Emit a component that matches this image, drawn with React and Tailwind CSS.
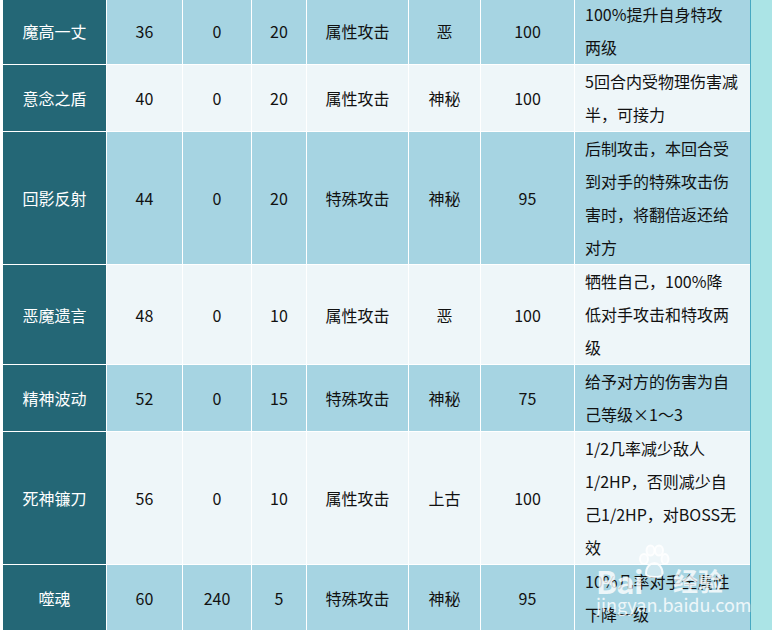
const rows = [
  { name: "魔高一丈", lv: "36", pp: "0", cnt: "20", kind: "属性攻击", attr: "恶", hit: "100", desc: ["100%提升自身特攻", "两级"] },
  { name: "意念之盾", lv: "40", pp: "0", cnt: "20", kind: "属性攻击", attr: "神秘", hit: "100", desc: ["5回合内受物理伤害减", "半，可接力"] },
  { name: "回影反射", lv: "44", pp: "0", cnt: "20", kind: "特殊攻击", attr: "神秘", hit: "95", desc: ["后制攻击，本回合受", "到对手的特殊攻击伤", "害时，将翻倍返还给", "对方"] },
  { name: "恶魔遗言", lv: "48", pp: "0", cnt: "10", kind: "属性攻击", attr: "恶", hit: "100", desc: ["牺牲自己，100%降", "低对手攻击和特攻两", "级"] },
  { name: "精神波动", lv: "52", pp: "0", cnt: "15", kind: "特殊攻击", attr: "神秘", hit: "75", desc: ["给予对方的伤害为自", "己等级×1～3"] },
  { name: "死神镰刀", lv: "56", pp: "0", cnt: "10", kind: "属性攻击", attr: "上古", hit: "100", desc: ["1/2几率减少敌人", "1/2HP，否则减少自", "己1/2HP，对BOSS无", "效"] },
  { name: "噬魂", lv: "60", pp: "240", cnt: "5", kind: "特殊攻击", attr: "神秘", hit: "95", desc: ["10%几率对手全属性", "下降一级"] },
];

function Cell({ bg, children }) {
  return <div className={`${bg} flex items-center justify-center text-[#111]`}>{children}</div>;
}

// baidu jingyan watermark sitting over the last rows
function Watermark() {
  return (
    <div className="absolute left-[594px] top-[540px] w-[150px] h-[80px] pointer-events-none text-white/80">
      <svg className="absolute left-[44px] top-[4px]" width="32" height="36" viewBox="0 0 32 36">
        <g fill="rgba(255,255,255,0.45)" stroke="rgba(255,255,255,0.85)" strokeWidth="2">
          <ellipse cx="6" cy="15" rx="4" ry="5" />
          <ellipse cx="12.5" cy="6.5" rx="4" ry="5" />
          <ellipse cx="21" cy="6.5" rx="4" ry="5" />
          <ellipse cx="27" cy="15" rx="3.5" ry="5" />
          <path d="M8 30 C 8 22, 13 19, 16.5 19 C 20 19, 25 23, 24.5 30 C 24 34, 9 34, 8 30 Z" />
        </g>
      </svg>
      <div className="absolute left-[2px] top-[25px] text-[31px] leading-none font-bold tracking-tight">Bai</div>
      <div className="absolute left-[79px] top-[28px] text-[25px] leading-none font-bold">经验</div>
      <div className="absolute left-[2px] top-[55px] text-[18px] leading-none">jingyan.baidu.com</div>
    </div>
  );
}

export default function App() {
  return (
    <div className="relative w-[772px] h-[630px] overflow-hidden flex bg-white font-['Noto_Sans_CJK_SC',sans-serif] text-[16px]">
      <div className="w-[750px] shrink-0 bg-white pl-[3px] -mt-[2px]">
        <div className="grid grid-cols-[103px_75px_68px_54px_101px_71px_93px_175px] gap-px bg-white">
          {rows.map((r, i) => {
            const bg = i % 2 === 0 ? "bg-[#a6d4e2]" : "bg-[#eef6f9]";
            return [
              <div key={`n${i}`} className="bg-[#246776] text-white flex items-center justify-center">{r.name}</div>,
              <Cell key={`a${i}`} bg={bg}>{r.lv}</Cell>,
              <Cell key={`b${i}`} bg={bg}>{r.pp}</Cell>,
              <Cell key={`c${i}`} bg={bg}>{r.cnt}</Cell>,
              <Cell key={`d${i}`} bg={bg}>{r.kind}</Cell>,
              <Cell key={`e${i}`} bg={bg}>{r.attr}</Cell>,
              <Cell key={`f${i}`} bg={bg}>{r.hit}</Cell>,
              <div key={`g${i}`} className={`${bg} pl-[10px] leading-[33px] text-[#111] whitespace-nowrap`}>
                {r.desc.map((line, j) => (
                  <div key={j}>{line}</div>
                ))}
              </div>,
            ];
          })}
        </div>
      </div>
      <div className="flex-1 bg-[#abe4e6] border-l border-[#46a8c1]" />
      <Watermark />
    </div>
  );
}
